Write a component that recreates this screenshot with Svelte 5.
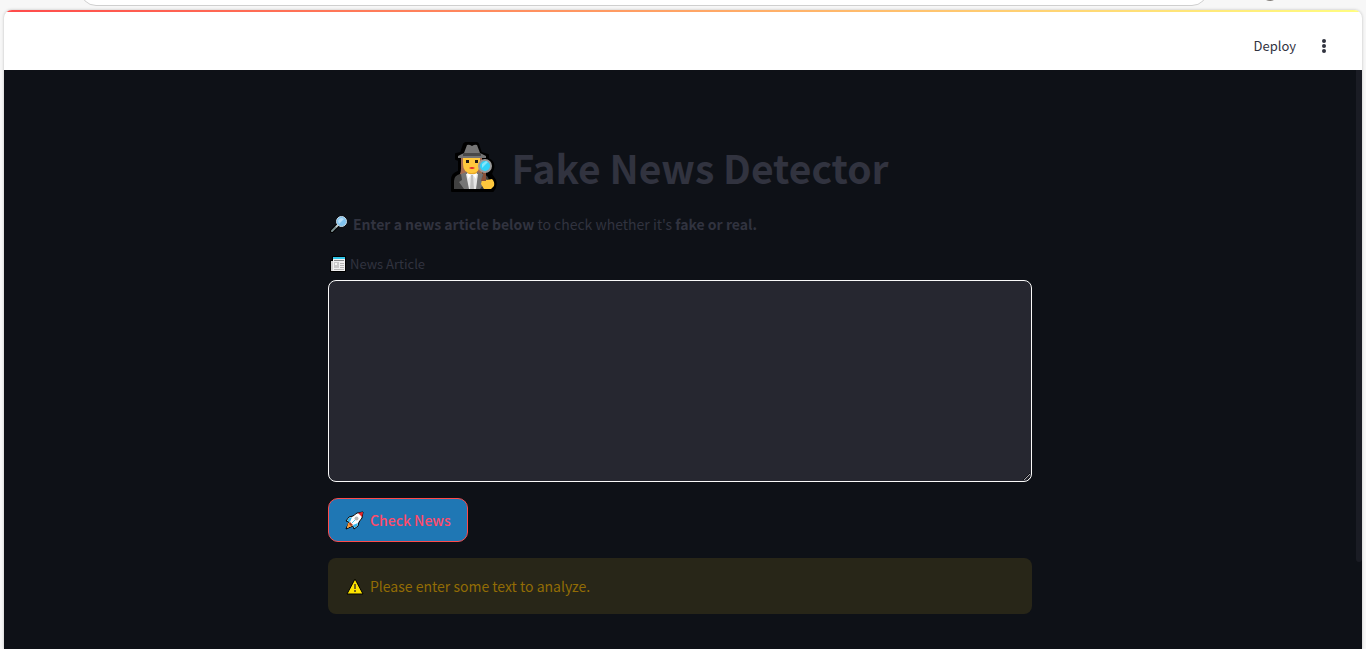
<script>
  let article = $state('');
</script>

<div class="browser">
  <div class="toolbar">
    <div class="address"></div>
    <div class="avatar"></div>
  </div>
  <div class="frame">
    <div class="decoration"></div>
    <header>
      <button class="deploy" type="button">Deploy</button>
      <button class="menu" type="button" aria-label="Main menu">
        <svg width="20" height="20" viewBox="0 0 20 20" fill="#31333f">
          <circle cx="10" cy="5" r="2" /><circle cx="10" cy="10" r="2" /><circle cx="10" cy="15" r="2" />
        </svg>
      </button>
    </header>
    <div class="view">
      <main>
        <h1>
          <svg width="46" height="50" viewBox="0 0 46 50" aria-hidden="true">
            <path d="M1 49V38q0-6 6-8l1-1V18l-3-1v-5l5-1 3-9q4-3 7-1 4-2 7 1l3 9 7 2v4q7 3 5 10l-2 5 4 6q2 6-2 11z" fill="#000" stroke="#000" stroke-width="2" stroke-linejoin="round" />
            <path d="M10 16h21v10q0 8 3 9H7q3-3 3-9z" fill="#a56b50" />
            <path d="M16 27h10v8H16z" fill="#e8a727" />
            <path d="M12 15h17v7q0 9-8.500 9T12 22z" fill="#ffc83d" />
            <path d="M3 47V39q0-6 7-7h21q7 1 7 7v8z" fill="#404040" />
            <path d="M10 32l6-2 5 17h-8l-5-7 3-2zM32 32l-6-2-5 17h8l5-7-3-2z" fill="#757575" />
            <path d="M15 32h12l-2 15h-7z" fill="#e6e6e6" />
            <path d="M16 31l4 2-3 4zM26 31l-4 2 3 4z" fill="#fff" />
            <path d="M20 33h2l1 14h-4z" fill="#bdbdbd" />
            <path d="M13 11l3-8q2-1 5 1 3-2 5-1l3 8 6 3v2H7v-2z" fill="#757575" />
            <path d="M12 11h18v3H12z" fill="#484848" />
            <rect x="15" y="18" width="3" height="3" fill="#211915" />
            <rect x="24" y="18" width="3" height="3" fill="#211915" />
            <path d="M18 26q3-2 6 0-3 2-6 0z" fill="#e22b2b" />
            <path d="M32 30h3v9h-3z" fill="#8a5038" />
            <circle cx="34" cy="24" r="6" fill="#31d2f7" stroke="#9b9b9b" stroke-width="2" />
            <path d="M31 22l4-3 2 1-6 6z" fill="#83e6fb" />
            <path d="M31 38q2-2 5 0l5-1q3 3 2 7l-3 3h-7l-3-5z" fill="#ffc83d" />
            <path d="M31 35l4 1v3h-5z" fill="#8a5038" />
          </svg>
          <span>Fake News Detector</span>
        </h1>

        <p class="intro">
          <svg width="18" height="18" viewBox="0 0 18 18" aria-hidden="true">
            <path d="M2 16l6-6" stroke="#000" stroke-width="4" stroke-linecap="round" />
            <path d="M2 16l4-4" stroke="#7c8f91" stroke-width="2" stroke-linecap="round" />
            <path d="M6 12l2-2" stroke="#c1cccd" stroke-width="2" />
            <circle cx="11.500" cy="6.500" r="5" fill="#80c3ef" stroke="#c9dce8" />
            <path d="M8 6q1-3 4-3l2 1-5 5z" fill="#b8def7" />
          </svg>
          <span><strong>Enter a news article below</strong> to check whether it's <strong>fake or real.</strong></span>
        </p>

        <label for="article">
          <svg width="16" height="16" viewBox="0 0 16 16" aria-hidden="true">
            <path d="M0 4h2V0h14v16H0z" fill="#000" />
            <path d="M1 5h2v10H1z" fill="#d0d0d0" />
            <path d="M3 1h12v14H2l1-1z" fill="#f0f0f0" />
            <path d="M3 1h12v2H3z" fill="#30c5e8" />
            <path d="M4 4.500h10" stroke="#8a8a8a" />
            <path d="M10 7.500h4M10 9.500h4M10 11.500h4M4 13.500h10" stroke="#b5b5b5" />
            <path d="M4 6h5v6H4z" fill="#c9c9c9" />
            <path d="M5 7h2v2H5z" fill="#f4f4f4" />
          </svg>
          <span>News Article</span>
        </label>
        <textarea id="article" bind:value={article}></textarea>

        <button class="check" type="button">
          <svg width="19" height="19" viewBox="0 0 19 19" aria-hidden="true">
            <path d="M18 1q-7 0-10 4L4 6 1 10l3 1-3 7 7-3 1 3 4-3 1-4q4-3 4-10z" fill="#fff" stroke="#000" stroke-width="1" stroke-linejoin="round" />
            <path d="M18 1l-5 1 4 4z" fill="#e5252a" />
            <path d="M7 6L4 7l-2 3 3 1zM13 12l-1 3-3 2-1-3z" fill="#31b5ed" />
            <path d="M3 12q3-1 4 3l-5 2z" fill="#ff9b32" />
            <path d="M5 11l3 3-2 1-2-2z" fill="#a63c24" />
            <circle cx="11.500" cy="7.500" r="2" fill="#b8b8b8" />
            <path d="M7 12l3-3" stroke="#53c8ef" />
          </svg>
          <span>Check News</span>
        </button>

        <div class="alert" role="alert">
          <svg width="18" height="17" viewBox="0 0 18 17" aria-hidden="true">
            <path d="M9 1l8 15H1z" fill="#fde300" stroke="#000" stroke-width="1" stroke-linejoin="round" />
            <path d="M8 6h2v5H8zM8 12h2v2H8z" fill="#75651b" />
          </svg>
          <span>Please enter some text to analyze.</span>
        </div>
      </main>
      <div class="scroll"></div>
    </div>
  </div>
</div>

<style>
  :global(body) { margin: 0; background: #f7f7f7; }
  .browser {
    display: flex; flex-direction: column; height: 100vh; overflow: hidden;
    font-family: "Noto Sans CJK SC", "Noto Sans", sans-serif;
    color: #31333f;
  }
  .toolbar { display: flex; height: 10px; padding: 0 88px 0 80px; gap: 54px; align-items: flex-end; flex: none; }
  .address { flex: 1; height: 32px; margin-bottom: 4px; border: 1px solid #cfcfcf; border-radius: 17px; background: #fff; box-sizing: border-box; }
  .avatar { width: 16px; height: 16px; margin-bottom: 9px; border-radius: 50%; background: #85807c; }
  .frame {
    flex: 1; display: flex; flex-direction: column; margin: 0 4px; min-height: 0;
    border-radius: 8px 8px 0 0; overflow: hidden; background: #fff; box-shadow: 0 0 3px #bbb;
  }
  .decoration { height: 2px; flex: none; background: linear-gradient(90deg, #ff4b4b, #fffd80); }
  header { height: 58px; flex: none; display: flex; justify-content: flex-end; align-items: center; gap: 18px; padding: 10px 28px 0 0; box-sizing: border-box; }
  button { font: inherit; cursor: pointer; }
  .deploy, .menu { border: 0; padding: 0; background: none; color: inherit; }
  .deploy { font-size: 13px; line-height: 20px; }
  .menu { height: 20px; }
  svg { display: block; flex: none; }
  .view { flex: 1; display: flex; min-height: 0; background: #0e1117; }
  main { flex: 1; max-width: 704px; margin: 0 auto; padding-top: 65px; display: flex; flex-direction: column; }
  .scroll { width: 6px; height: 492px; background: #1a1c24; border-radius: 0 0 3px 3px; }
  h1 { display: flex; justify-content: center; align-items: center; gap: 14px; margin: 0 0 13px; padding: 6px 20px 6px 0; font-size: 39px; line-height: 52px; font-weight: 700; }
  .intro { display: flex; align-items: center; gap: 5px; margin: 0 0 16px; padding-left: 2px; font-size: 14px; line-height: 24px; }
  .intro strong { font-weight: 700; }
  label { display: flex; align-items: center; gap: 4px; margin-bottom: 4px; padding-left: 2px; font-size: 13px; line-height: 24px; }
  textarea { display: block; box-sizing: border-box; width: 100%; height: 202px; padding: 12px; border: 1px solid #fafafa; border-radius: 8px; outline: 0; background: #262730; color: #fafafa; font: inherit; resize: vertical; }
  .check { align-self: flex-start; display: flex; align-items: center; gap: 6px; margin: 16px 0; height: 44px; padding: 0 16px; border: 1px solid #ff4b4b; border-radius: 10px; background: #1f77b4; color: #ff4b6b; font-size: 14px; font-weight: 500; }
  .alert { display: flex; align-items: center; gap: 6px; padding: 16px 18px; border-radius: 8px; background: #282618; color: #926c05; font-size: 14px; line-height: 24px; }
</style>
